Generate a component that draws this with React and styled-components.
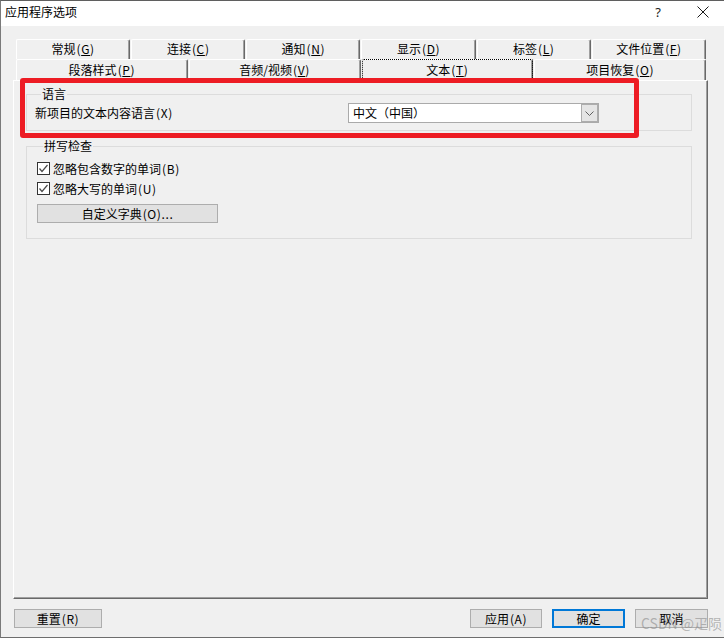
import styled, { createGlobalStyle } from "styled-components";

const GlobalStyle = createGlobalStyle`
  html, body {
    margin: 0;
    background: #ffffff;
  }
  body {
    font-family: "SimSun", "Noto Sans CJK SC", sans-serif;
    font-size: 12px;
    color: #000;
  }
  * {
    box-sizing: border-box;
  }
`;

const topTabs = [
  { label: "常规", key: "G" },
  { label: "连接", key: "C" },
  { label: "通知", key: "N" },
  { label: "显示", key: "D" },
  { label: "标签", key: "L" },
  { label: "文件位置", key: "F" },
];

const bottomTabs = [
  { label: "段落样式", key: "P" },
  { label: "音频/视频", key: "V" },
  { label: "文本", key: "T", active: true },
  { label: "项目恢复", key: "O" },
];

const Check = () => (
  <CheckBox>
    <svg width="11" height="11" viewBox="0 0 11 11">
      <path d="M1.5 5.5 L4 8.5 L9.5 2" stroke="#4a4a4a" strokeWidth="1.2" fill="none" />
    </svg>
  </CheckBox>
);

const App = () => {
  return (
    <>
      <GlobalStyle />
      <Window>
        <TitleBar>
          <Title>应用程序选项</Title>
          <TitleControls>
            <HelpMark>?</HelpMark>
            <svg width="12" height="12" viewBox="0 0 12 12">
              <path d="M0.5 0.5 L11.5 11.5 M11.5 0.5 L0.5 11.5" stroke="#1a1a1a" strokeWidth="1" fill="none" />
            </svg>
          </TitleControls>
        </TitleBar>

        <Body>
          <TabRow $cols={6} $h={20}>
            {topTabs.map(({ label, key }) => (
              <Tab key={key}>
                {label}
                <Latin>
                  (<u>{key}</u>)
                </Latin>
              </Tab>
            ))}
          </TabRow>
          <TabRow $cols={4} $h={21}>
            {bottomTabs.map(({ label, key, active }) => (
              <Tab key={key} $active={active}>
                {label}
                <Latin>
                  (<u>{key}</u>)
                </Latin>
              </Tab>
            ))}
          </TabRow>

          <Panel>
            <GroupBox>
              <Legend>语言</Legend>
              <LangRow>
                <FieldLabel>
                  新项目的文本内容语言<Latin>(X)</Latin>
                </FieldLabel>
                <Select>
                  <SelectValue>中文（中国）</SelectValue>
                  <DropButton>
                    <svg width="9" height="5" viewBox="0 0 9 5">
                      <path d="M0.5 0.5 L4.5 4.5 L8.5 0.5" stroke="#606060" strokeWidth="1" fill="none" />
                    </svg>
                  </DropButton>
                </Select>
              </LangRow>
            </GroupBox>

            <GroupBox $spell>
              <Legend>拼写检查</Legend>
              <CheckRow>
                <Check />
                <span>
                  忽略包含数字的单词<Latin>(B)</Latin>
                </span>
              </CheckRow>
              <CheckRow>
                <Check />
                <span>
                  忽略大写的单词<Latin>(U)</Latin>
                </span>
              </CheckRow>
              <PushButton $w={181} $mt={5}>
                自定义字典<Latin>(O)...</Latin>
              </PushButton>
            </GroupBox>
          </Panel>

          <ButtonBar>
            <PushButton $w={88} $ml={1}>
              重置<Latin>(R)</Latin>
            </PushButton>
            <Spacer />
            <PushButton $w={72}>
              应用<Latin>(A)</Latin>
            </PushButton>
            <PushButton $w={73} $primary>确定</PushButton>
            <PushButton $w={73}>取消</PushButton>
          </ButtonBar>
        </Body>

        <Highlight />
        <Watermark>CSDN @疋陨</Watermark>
      </Window>
    </>
  );
};

export default App;

const Window = styled.div`
  position: relative;
  width: 724px;
  height: 638px;
  border-top: 1px solid #5f5f5f;
  border-left: 1px solid #7a7a7a;
  border-bottom: 1px solid #6d6d6d;
  background: #f0f0f0;
  display: flex;
  flex-direction: column;
  overflow: hidden;
`;

const TitleBar = styled.div`
  height: 25px;
  background: #ffffff;
  display: flex;
  align-items: center;
  padding: 0 0 3px 4px;
  flex-shrink: 0;
`;

const Title = styled.div`
  font-family: "Noto Sans CJK SC", sans-serif;
  font-size: 12px;
  line-height: 14px;
`;

const TitleControls = styled.div`
  margin-left: auto;
  display: flex;
  align-items: center;
  gap: 36px;
  padding-right: 15px;
`;

const HelpMark = styled.span`
  font-family: "Noto Sans", sans-serif;
  font-size: 13px;
  line-height: 14px;
  color: #1a1a1a;
`;

const Latin = styled.span`
  letter-spacing: 0.6px;
  margin-left: 1px;
`;

const Body = styled.div`
  flex: 1;
  display: flex;
  flex-direction: column;
  padding: 13px 16px 9px 12px;
  min-height: 0;
`;

const TabRow = styled.div`
  display: grid;
  grid-template-columns: repeat(${(p) => p.$cols}, 1fr);
  column-gap: 1px;
  height: ${(p) => p.$h}px;
  margin: 0 2px 0 3px;
  flex-shrink: 0;
`;

const Tab = styled.div`
  display: flex;
  align-items: center;
  justify-content: center;
  padding-bottom: 1px;
  background: #f0f0f0;
  border-top: 1px solid #ffffff;
  border-left: 1px solid #ffffff;
  border-right: 1px solid #696969;
  border-radius: 2px 2px 0 0;
  box-shadow: inset -1px 0 0 #a0a0a0;
  font-size: 12px;
  line-height: 14px;
  white-space: nowrap;
  outline: ${(p) => (p.$active ? "1px dotted #000" : "none")};
  outline-offset: -1px;

  u {
    text-decoration-thickness: 1px;
    text-underline-offset: 1px;
  }
`;

const Panel = styled.div`
  flex: 1;
  display: flex;
  flex-direction: column;
  padding: 6px 15px 0 12px;
  border-top: 1px solid #ffffff;
  border-left: 1px solid #ffffff;
  border-right: 1px solid #696969;
  border-bottom: 1px solid #696969;
  box-shadow: inset -1px -1px 0 #a0a0a0;
  min-height: 0;
`;

const GroupBox = styled.fieldset`
  margin: ${(p) => (p.$spell ? "8px 0 0 0" : "0")};
  padding: ${(p) => (p.$spell ? "6px 10px 15px 10px" : "2px 8px 7px 8px")};
  border: 1px solid #dcdcdc;
  min-width: 0;
  display: flex;
  flex-direction: column;
  align-items: flex-start;
`;

const Legend = styled.legend`
  padding: 0 1px;
  margin-left: 6px;
  font-size: 12px;
  line-height: 14px;
`;

const LangRow = styled.div`
  display: flex;
  align-items: center;
  width: 100%;
`;

const FieldLabel = styled.div`
  width: 313px;
  line-height: 14px;
  padding-bottom: 1px;
`;

const Select = styled.div`
  width: 251px;
  height: 20px;
  background: #ffffff;
  border: 1px solid #aaaaaa;
  display: flex;
  align-items: center;
  padding-left: 4px;
`;

const SelectValue = styled.span`
  flex: 1;
  line-height: 14px;
`;

const DropButton = styled.div`
  width: 17px;
  height: 18px;
  background: #e5e5e5;
  border: 1px solid #adadad;
  display: flex;
  align-items: center;
  justify-content: center;
  padding-top: 1px;
`;

const CheckRow = styled.label`
  display: flex;
  align-items: center;
  gap: 3px;
  height: 20px;
  line-height: 14px;
  margin-top: ${(p) => p.$mt || 0}px;

  span {
    margin-top: -1px;
  }
`;

const CheckBox = styled.span`
  width: 13px;
  height: 13px;
  border: 1px solid #333333;
  background: #ffffff;
  display: flex;
  align-items: center;
  justify-content: center;
`;

const ButtonBar = styled.div`
  display: flex;
  gap: 10px;
  margin-top: 10px;
  height: 19px;
  flex-shrink: 0;
`;

const Spacer = styled.div`
  flex: 1;
`;

const PushButton = styled.div`
  width: ${(p) => p.$w}px;
  height: 19px;
  margin-top: ${(p) => p.$mt || 0}px;
  margin-left: ${(p) => p.$ml || 0}px;
  background: #e1e1e1;
  border: ${(p) => (p.$primary ? "2px solid #0078d7" : "1px solid #adadad")};
  display: flex;
  align-items: center;
  justify-content: center;
  font-size: 12px;
  line-height: 14px;
  white-space: nowrap;
  flex-shrink: 0;
`;

const Highlight = styled.div`
  position: absolute;
  left: 19px;
  top: 77px;
  width: 619px;
  height: 60px;
  border: 5px solid #ed1c24;
  border-radius: 3px;
  pointer-events: none;
`;

const Watermark = styled.div`
  position: absolute;
  left: 640px;
  top: 614px;
  font-family: "Noto Sans CJK SC", sans-serif;
  font-size: 14px;
  line-height: 16px;
  color: rgba(140, 140, 140, 0.6);
  pointer-events: none;
`;
